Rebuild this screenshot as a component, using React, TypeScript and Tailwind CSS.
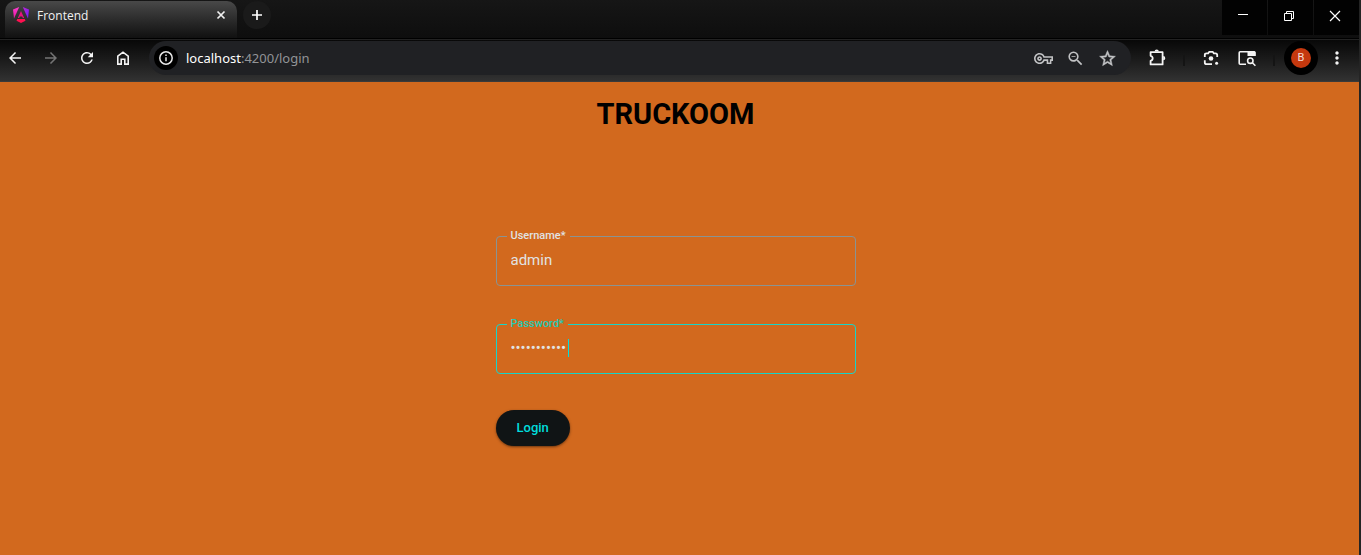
import { useState } from "react";
import type { ReactNode } from "react";
import {
  MdArrowBack,
  MdArrowForward,
  MdMoreVert,
  MdOutlineVpnKey,
  MdRefresh,
  MdStarOutline,
  MdZoomOut,
} from "react-icons/md";

function IconButton({ label, className = "", children }: { label: string; className?: string; children: ReactNode }) {
  return (
    <button type="button" aria-label={label} className={`flex shrink-0 items-center justify-center ${className}`}>
      {children}
    </button>
  );
}

function AngularLogo() {
  return (
    <svg className="h-4 w-4" viewBox="0 0 16 16" aria-hidden="true">
      <defs>
        <linearGradient id="ng-left" x1="0" y1="0" x2="0" y2="1">
          <stop offset="0" stopColor="#ff3bd0" />
          <stop offset="1" stopColor="#e619a0" />
        </linearGradient>
        <linearGradient id="ng-right" x1="0" y1="0" x2="1" y2="1">
          <stop offset="0" stopColor="#c026d3" />
          <stop offset="1" stopColor="#6d1fff" />
        </linearGradient>
      </defs>
      <path d="M0 2.5 6.2 0 1 11.5z" fill="url(#ng-left)" />
      <path d="M16 2.5 9.8 0 15 11.5z" fill="url(#ng-right)" />
      <path d="M8 4 11.2 11H9.8L9.2 9.5H6.8L6.2 11H4.8z" fill="#e6127e" />
      <path d="M4.2 12h7.6l.7 1.8L8 16l-4.5-2.2z" fill="#ff1050" />
    </svg>
  );
}

function TabStrip() {
  return (
    <div className="flex h-[38px] items-start bg-linear-to-b from-[#161616] to-[#0e0e0e]">
      <div className="flex h-full w-[243px] shrink-0 pt-px pr-[6px] pl-[5px]">
        <div className="flex grow items-start rounded-t-[10px] bg-linear-to-b from-[#494949] to-[#111111] px-2 pt-[6px]">
          <AngularLogo />
          <span className="ml-2 grow font-['Open_Sans','Noto_Sans',sans-serif] text-[12px] leading-[17px] text-[#f1f1f1]">
            Frontend
          </span>
          <IconButton label="Close tab" className="h-4 w-4">
            <svg className="h-4 w-4" viewBox="0 0 16 16" fill="none" stroke="#f0f0f0" strokeWidth="1.7">
              <path d="m4.5 4.5 7 7m0-7-7 7" />
            </svg>
          </IconButton>
        </div>
      </div>
      <IconButton label="New tab" className="mt-px h-7 w-7 rounded-full bg-[#1a1a1a]">
        <svg className="h-4 w-4" viewBox="0 0 16 16" fill="none" stroke="#ffffff" strokeWidth="1.7">
          <path d="M8 3v10M3 8h10" />
        </svg>
      </IconButton>
      <div className="ml-auto flex h-[35px] gap-px">
        <IconButton label="Minimize" className="w-[45px] bg-[#020202]">
          <svg className="mr-1 mb-1 h-3 w-3" viewBox="0 0 12 12" stroke="#ffffff">
            <path d="M1 4.5h10" />
          </svg>
        </IconButton>
        <IconButton label="Restore" className="w-[45px] bg-[#020202]">
          <svg className="mr-1 mb-1 h-3 w-3" viewBox="0 0 12 12" fill="none" stroke="#ffffff">
            <path d="M1.5 3.5h7v7h-7zM3.5 3V1.5h7v7H9" />
          </svg>
        </IconButton>
        <IconButton label="Close" className="w-[45px] bg-[#020202]">
          <svg className="mr-1 mb-1 h-3 w-3" viewBox="0 0 12 12" stroke="#ffffff" strokeWidth="1.2">
            <path d="m1 1 10 10M11 1 1 11" />
          </svg>
        </IconButton>
      </div>
    </div>
  );
}

function AddressBar() {
  return (
    <div className="ml-4 flex h-[34px] grow items-center rounded-full bg-[#202124] pr-[14px] pl-[5px]">
      <IconButton label="View site information" className="h-6 w-6 rounded-full bg-black">
        <svg className="h-4 w-4" viewBox="0 0 16 16" fill="none" stroke="#e8e8e8" strokeWidth="1.5">
          <circle cx="8" cy="8" r="6.2" />
          <path d="M8 7.2v4M8 4.6v1.5" />
        </svg>
      </IconButton>
      <a
        href="#login"
        className="ml-2 grow font-['Noto_Sans','Open_Sans',sans-serif] text-[13px] leading-5 text-[#929497]"
      >
        <span className="text-white">localhost</span>:4200/login
      </a>
      <div className="flex items-center gap-3 text-[#c2c3c5]">
        <IconButton label="Manage passwords" className="h-5 w-5">
          <MdOutlineVpnKey size={19} />
        </IconButton>
        <IconButton label="Zoom" className="h-5 w-5">
          <MdZoomOut size={19} />
        </IconButton>
        <IconButton label="Bookmark this tab" className="h-5 w-5">
          <MdStarOutline size={19} stroke="currentColor" strokeWidth={0.6} />
        </IconButton>
      </div>
    </div>
  );
}

function Toolbar() {
  return (
    <div className="flex h-[43px] items-center border-y border-t-[#222222] border-b-[#3a3a3a] bg-linear-to-b from-[#080808] to-[#323232] pr-3 pb-[5px] pl-[5px] text-[#f4f4f4]">
      <div className="flex items-center gap-4">
        <IconButton label="Back" className="h-5 w-5">
          <MdArrowBack size={18} />
        </IconButton>
        <IconButton label="Forward" className="h-5 w-5 text-[#747474]">
          <MdArrowForward size={18} />
        </IconButton>
        <IconButton label="Reload" className="h-5 w-5">
          <MdRefresh size={18} />
        </IconButton>
        <IconButton label="Home" className="h-5 w-5">
          <svg className="h-4 w-4" viewBox="0 0 16 16" fill="none" stroke="currentColor" strokeWidth="1.6">
            <path d="M2.8 6.2 8 2.2l5.2 4v7.9H9.8V9.3H6.2v4.8H2.8z" />
          </svg>
        </IconButton>
      </div>
      <AddressBar />
      <div className="ml-4 flex items-center">
        <IconButton label="Extensions" className="h-5 w-5">
          <svg className="h-5 w-5" viewBox="0 0 20 20">
            <path
              d="M3.6 4.2h12v12.2h-12v-3.6c2.8-.6 2.8-4.4 0-5z"
              fill="none"
              stroke="currentColor"
              strokeWidth="1.8"
              strokeLinejoin="round"
            />
            <path d="M7.6 3.6a2.1 2.1 0 0 1 4.2 0zM16.2 8.1a2.1 2.1 0 0 1 0 4.2z" fill="currentColor" />
          </svg>
        </IconButton>
        <span className="mt-1 ml-4 h-[11px] w-[2px] bg-[#141414]" />
        <IconButton label="Search with Lens" className="ml-4 h-5 w-5">
          <svg className="h-5 w-5" viewBox="0 0 20 20" fill="none" stroke="currentColor" strokeWidth="1.8">
            <path d="M3.8 9V7q0-1.7 1.7-1.7h1.7l1.1-1.5h3.4l1.1 1.5h1.7q1.7 0 1.7 1.7v2M3.8 12.3v2.2q0 1.7 1.7 1.7H11" />
            <circle cx="10" cy="10.5" r="2.3" fill="currentColor" stroke="none" />
            <circle cx="15.6" cy="15.2" r="1.5" fill="currentColor" stroke="none" />
          </svg>
        </IconButton>
        <IconButton label="Side panel search" className="ml-4 h-5 w-5">
          <svg className="h-5 w-5" viewBox="0 0 20 20" fill="none" stroke="currentColor" strokeWidth="1.6">
            <path d="M9 16.2H3.2q-1 0-1-1V4.7q0-1 1-1h13.6q1 0 1 1V8" />
            <path d="M10.5 3h6.5q1.6 0 1.6 1.6V8h-8.1z" fill="currentColor" stroke="none" />
            <circle cx="13.3" cy="12.7" r="2.7" />
            <path d="m15.4 14.8 3 3" />
          </svg>
        </IconButton>
        <span className="mt-1 ml-4 h-[11px] w-[2px] bg-[#141414]" />
        <IconButton label="Profile" className="ml-[9px] h-[34px] w-[34px] rounded-full bg-black">
          <span className="flex h-5 w-5 items-center justify-center rounded-full bg-[#c5380e] font-[Roboto,sans-serif] text-[11px] leading-5 text-[#f6ddd5]">
            B
          </span>
        </IconButton>
        <IconButton label="Menu" className="ml-[9px] h-5 w-5">
          <MdMoreVert size={22} />
        </IconButton>
      </div>
    </div>
  );
}

interface FieldProps {
  id: string;
  label: string;
  type: string;
  value: string;
  tone: string;
  caret?: boolean;
  onChange: (value: string) => void;
}

function OutlinedField({ id, label, type, value, tone, caret = false, onChange }: FieldProps) {
  return (
    <fieldset className={`relative h-14 rounded border px-[10px] ${tone}`}>
      <legend className="px-1 font-[Roboto,sans-serif] text-[11px] leading-3 font-medium">
        <label htmlFor={id}>{label}*</label>
      </legend>
      <input
        id={id}
        type={type}
        required
        value={value}
        onChange={(event) => onChange(event.target.value)}
        className="mt-[6px] block h-6 w-full bg-transparent px-1 font-[Roboto,sans-serif] text-[15px] text-[#e1e3e3] caret-[#00dddd] outline-none"
      />
      {caret && <span className="absolute top-[9px] left-[71px] h-[18px] w-px bg-[#00dddd]" />}
    </fieldset>
  );
}

function LoginPage() {
  const [username, setUsername] = useState("admin");
  const [password, setPassword] = useState("truckoom123");

  return (
    <main className="flex grow flex-col items-center bg-[#d2691e] pt-4 pr-2 font-[Roboto,sans-serif]">
      <h1 className="text-[29px] leading-8 font-bold text-black">TRUCKOOM</h1>
      <form className="mt-[100px] w-full max-w-[360px]" onSubmit={(event) => event.preventDefault()}>
        <OutlinedField
          id="username"
          label="Username"
          type="text"
          value={username}
          tone="border-[#899392] text-[#e1e3e3]"
          onChange={setUsername}
        />
        <div className="mt-8">
          <OutlinedField
            id="password"
            label="Password"
            type="password"
            value={password}
            tone="border-[#16d5c9] text-[#27c9b5]"
            caret
            onChange={setPassword}
          />
        </div>
        <button
          type="submit"
          className="mt-9 h-9 rounded-full bg-[#101415] px-[21px] font-[Roboto,sans-serif] text-[13px] font-medium text-[#00dddd] shadow-sm shadow-black/40"
        >
          Login
        </button>
      </form>
    </main>
  );
}

export default function App() {
  return (
    <div className="flex min-h-screen flex-col border-r-2 border-[#242424] bg-[#0a0a0a]">
      <header>
        <TabStrip />
        <div className="h-px bg-black" />
        <Toolbar />
      </header>
      <LoginPage />
    </div>
  );
}
